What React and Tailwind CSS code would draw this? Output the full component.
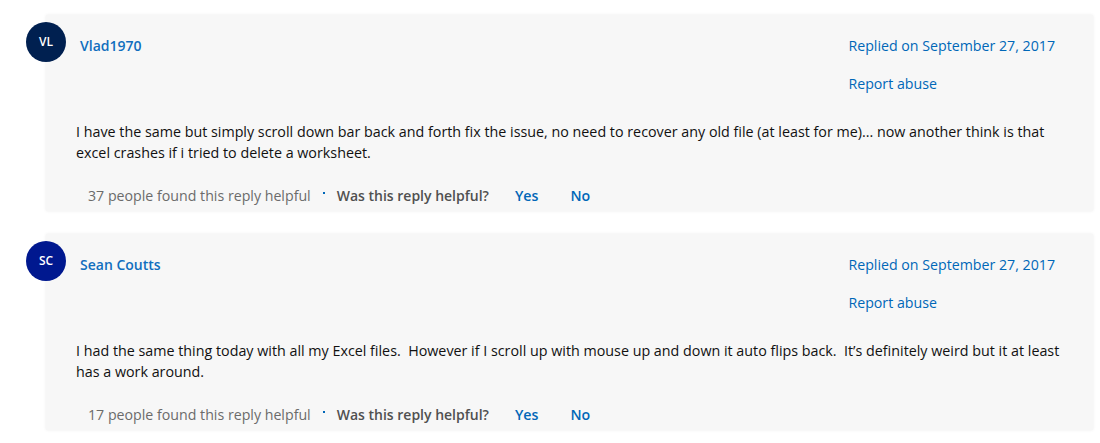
import React from 'react';

const replies = [
  {
    initials: 'VL',
    avatarBg: 'bg-[#002050]',
    name: 'Vlad1970',
    date: 'September 27, 2017',
    body: 'I have the same but simply scroll down bar back and forth fix the issue, no need to recover any old file (at least for me)... now another think is that excel crashes if i tried to delete a worksheet.',
    helpful: 37,
  },
  {
    initials: 'SC',
    avatarBg: 'bg-[#00188f]',
    name: 'Sean Coutts',
    date: 'September 27, 2017',
    body: 'I had the same thing today with all my Excel files.  However if I scroll up with mouse up and down it auto flips back.  It\u2019s definitely weird but it at least has a work around.',
    helpful: 17,
  },
];

const Reply = ({ reply }) => {
  return (
    <div className="flex items-start">
      <div
        className={`relative z-10 mt-[7px] ml-[26px] flex h-10 w-10 shrink-0 items-center justify-center rounded-full ${reply.avatarBg} text-[12px] font-semibold text-white`}
      >
        {reply.initials}
      </div>
      <div className="-ml-[20px] mr-[7px] flex-1 bg-[#f7f7f7] pt-[21px] pb-[5px] shadow-[0_0_3px_rgba(0,0,0,0.08)]">
        <div className="flex justify-between pr-[38px]">
          <a href="#" className="pl-[34px] text-[14px] leading-5 font-semibold text-[#106ebe]">
            {reply.name}
          </a>
          <div className="flex flex-col gap-[18px] text-[14.2px] leading-5 text-[#0067b8]">
            <a href="#">Replied on {reply.date}</a>
            <a href="#">Report abuse</a>
          </div>
        </div>
        <p className="mt-[27px] pl-[30px] pr-[20px] text-[14.3px] leading-[21px] whitespace-pre-wrap text-[#111]">
          {reply.body}
        </p>
        <div className="mt-[23px] flex items-center pl-[42px] text-[14.2px] leading-5">
          <span className="text-[#6b6b6b]">{reply.helpful} people found this reply helpful</span>
          <span className="mx-[12px] -mt-[6px] h-[2px] w-[2px] bg-[#0067b8]"></span>
          <span className="text-[14px] font-semibold text-[#505050]">Was this reply helpful?</span>
          <button className="ml-[26px] font-semibold text-[#0067b8]">Yes</button>
          <button className="ml-[32px] font-semibold text-[#0067b8]">No</button>
        </div>
      </div>
    </div>
  );
};

const App = () => {
  return (
    <div className="min-h-screen bg-white pt-[15px] font-['Open_Sans',sans-serif]">
      <div className="flex flex-col gap-[23px]">
        {replies.map((r) => (
          <Reply key={r.name} reply={r} />
        ))}
      </div>
    </div>
  );
};

export default App;
